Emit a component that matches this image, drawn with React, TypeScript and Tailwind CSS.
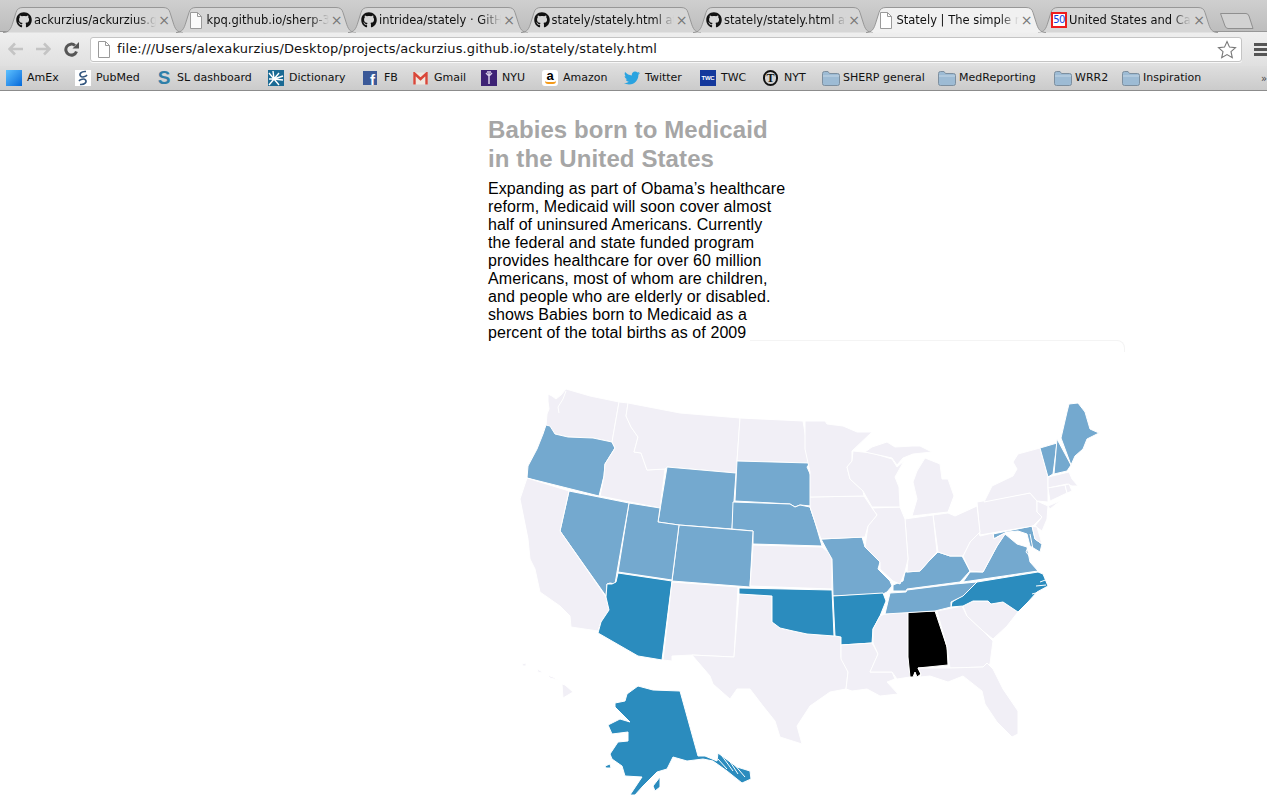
import React from 'react';
import { FaGithub, FaTwitter } from 'react-icons/fa';

const NONE = '#f1eff6';
const LIGHT = '#74a9cf';
const DARK = '#2b8cbe';

interface State {
  id: string;
  fill: string;
  pts: string;
}

// page coordinates, viewBox below is offset to match
const states: State[] = [
  { id: 'WA', fill: NONE, pts: '548,395 552,397 556,400 561,396 566,390 590,397 619,403 612,443 593,439 568,438 555,435 546,427 547,415 549,410 548,402' },
  { id: 'OR', fill: LIGHT, pts: '546,426 550,427 555,435 568,438 593,439 612,443 615,449 605,465 604,477 599,497 527,479 528,467 537,450 543,435' },
  { id: 'ID', fill: NONE, pts: '619,403 628,404 626,417 631,428 638,438 634,453 641,454 647,471 665,470 660,509 600,497 604,477 605,465 615,449 612,443' },
  { id: 'MT', fill: NONE, pts: '628,404 680,414 740,419 737,462 736,474 667,468 665,470 647,471 641,454 634,453 638,438 631,428 626,417' },
  { id: 'WY', fill: LIGHT, pts: '667,468 736,474 732,530 679,526 658,523' },
  { id: 'ND', fill: NONE, pts: '740,419 803,422 806,440 810,464 737,462' },
  { id: 'SD', fill: LIGHT, pts: '737,462 810,464 807,468 811,477 811,507 800,506 795,508 790,505 735,502' },
  { id: 'NE', fill: LIGHT, pts: '733,503 790,505 795,508 800,506 810,508 815,523 822,547 753,545 753,532 732,530' },
  { id: 'CO', fill: LIGHT, pts: '679,526 753,532 750,588 672,582' },
  { id: 'UT', fill: LIGHT, pts: '629,504 660,509 658,523 679,526 672,581 618,573' },
  { id: 'NV', fill: LIGHT, pts: '569,492 629,504 617,573 615,585 610,584 607,585 606,597 560,532' },
  { id: 'CA', fill: NONE, pts: '527,479 569,492 560,532 606,598 609,611 601,623 598,632 571,628 570,617 560,607 540,593 535,570 530,560 528,540 520,500' },
  { id: 'AZ', fill: DARK, pts: '618,574 672,582 662,661 638,657 598,634 601,623 609,611 606,598 607,585 612,585 616,583' },
  { id: 'NM', fill: NONE, pts: '672,583 738,588 734,658 692,656 672,657 672,662 663,661' },
  { id: 'TX', fill: NONE, pts: '739,595 772,597 772,623 780,629 793,632 807,635 835,637 841,638 841,658 848,673 846,690 830,693 810,707 797,727 802,745 780,738 775,722 763,707 750,690 737,690 730,700 713,685 710,677 692,656 734,658' },
  { id: 'OK', fill: DARK, pts: '739,589 832,591 834,637 807,635 793,632 780,629 772,623 772,597 739,595' },
  { id: 'KS', fill: NONE, pts: '753,546 822,548 828,553 832,560 832,590 750,587' },
  { id: 'MO', fill: LIGHT, pts: '821,540 862,538 865,548 880,563 878,570 890,582 892,587 887,593 883,595 833,597 832,560 828,553' },
  { id: 'AR', fill: DARK, pts: '833,597 883,594 886,602 880,617 873,630 872,644 841,646 841,638 835,637' },
  { id: 'LA', fill: NONE, pts: '841,646 872,644 878,655 870,673 892,673 895,680 887,683 898,695 880,697 867,690 852,692 846,690 848,673 841,660' },
  { id: 'MS', fill: NONE, pts: '885,615 908,613 908,658 910,678 897,680 892,673 870,673 878,655 873,644 873,630 880,617' },
  { id: 'AL', fill: '#000000', pts: '908,613 935,612 947,648 948,666 918,669 921,675 917,678 915,673 913,678 910,678 908,658' },
  { id: 'GA', fill: NONE, pts: '937,612 962,607 967,617 983,632 993,642 991,657 990,665 983,668 950,669 947,648' },
  { id: 'SC', fill: NONE, pts: '963,607 973,602 988,602 991,605 1003,603 1018,613 1007,627 993,640 983,632 967,617' },
  { id: 'FL', fill: NONE, pts: '950,669 983,668 987,664 993,670 1003,690 1018,712 1018,735 1012,738 997,723 985,705 982,692 963,677 948,683 930,677 920,678 921,675 918,669' },
  { id: 'NC', fill: DARK, pts: '951,608 952,603 965,595 977,583 1038,573 1043,575 1048,587 1037,593 1028,603 1018,613 1003,603 991,605 988,602 973,602 963,607' },
  { id: 'TN', fill: LIGHT, pts: '890,594 906,593 907,591 955,585 977,583 963,597 951,603 951,608 935,612 885,615' },
  { id: 'KY', fill: LIGHT, pts: '893,586 903,582 905,573 920,572 928,563 938,553 950,557 962,557 970,572 960,583 907,590 906,592 893,592' },
  { id: 'VA', fill: LIGHT, pts: '963,583 970,573 983,573 997,547 1005,535 1017,545 1027,548 1030,563 1038,572' },
  { id: 'MD', fill: LIGHT, pts: '993,535 1032,527 1035,540 1042,545 1040,553 1030,547 1027,535 1018,532 1007,533 997,538 994,540' },
  { id: 'WV', fill: NONE, pts: '978,530 980,537 993,534 994,540 1003,535 1007,533 1005,535 997,547 983,573 970,572 963,557 970,543' },
  { id: 'PA', fill: NONE, pts: '977,503 1030,494 1037,502 1037,513 1042,518 1033,527 980,536' },
  { id: 'NJ', fill: NONE, pts: '1037,502 1048,507 1047,520 1042,532 1035,527 1042,518 1037,513' },
  { id: 'OH', fill: NONE, pts: '933,516 948,514 955,517 977,507 980,533 970,543 963,557 950,557 938,553' },
  { id: 'IN', fill: NONE, pts: '905,520 933,516 937,553 928,563 920,572 907,573 908,560' },
  { id: 'IL', fill: NONE, pts: '872,509 900,508 905,520 908,560 905,573 900,585 893,582 880,570 880,563 865,548 868,527 877,516' },
  { id: 'IA', fill: NONE, pts: '810,498 864,497 872,509 877,516 868,527 865,538 821,540 815,523 810,508' },
  { id: 'MN', fill: NONE, pts: '805,422 825,422 827,425 843,427 857,433 872,433 852,452 852,462 847,468 850,480 863,492 864,497 810,498 810,473 805,450' },
  { id: 'WI', fill: NONE, pts: '853,452 872,454 892,460 897,468 904,462 895,478 899,488 900,508 872,508 863,492 850,480 847,468 852,462' },
  { id: 'MIU', fill: NONE, pts: '865,453 872,448 887,443 895,448 913,447 920,447 932,453 913,455 903,459 897,466 892,459' },
  { id: 'MIL', fill: NONE, pts: '925,459 940,465 942,480 948,480 954,497 948,513 912,517 917,500 913,483 917,472' },
  { id: 'NY', fill: NONE, pts: '1013,463 1018,455 1040,449 1048,478 1048,503 1037,502 1030,494 984,503 992,487 1013,477 1017,470' },
  { id: 'LI', fill: NONE, pts: '1048,507 1060,502 1050,510' },
  { id: 'VT', fill: LIGHT, pts: '1040,449 1057,444 1053,475 1048,478' },
  { id: 'NH', fill: LIGHT, pts: '1057,440 1071,466 1067,472 1054,475' },
  { id: 'ME', fill: LIGHT, pts: '1061,439 1067,413 1069,405 1078,404 1085,413 1090,430 1099,434 1087,440 1083,450 1075,457 1071,466' },
  { id: 'MA', fill: NONE, pts: '1048,478 1069,473 1072,480 1078,487 1072,487 1067,485 1048,489' },
  { id: 'CT', fill: NONE, pts: '1048,489 1065,486 1067,494 1050,502' },
  { id: 'RI', fill: NONE, pts: '1065,486 1069,485 1072,492 1067,494' },
  { id: 'DE', fill: NONE, pts: '1032,527 1035,540 1042,545 1037,528' },
  { id: 'HI1', fill: NONE, pts: '562,685 565,686 573,693 563,699' },
  { id: 'HI2', fill: NONE, pts: '547,676 553,678 558,681 550,679' },
  { id: 'HI3', fill: NONE, pts: '537,670 541,672 542,674 538,673' },
  { id: 'HI4', fill: NONE, pts: '522,665 526,664 526,667 523,667' },
  { id: 'AK', fill: DARK, pts: '627,695 638,687 653,691 680,692 698,757 705,757 717,762 718,754 737,768 750,772 751,780 742,784 727,772 713,762 703,760 687,762 673,758 667,770 657,773 643,787 635,796 630,796 642,778 625,777 622,767 612,760 610,755 618,743 628,742 628,733 612,735 608,726 620,720 630,723 615,708 615,704 625,702' },
  { id: 'AK2', fill: DARK, pts: '653,787 660,778 660,788 655,792' },
  { id: 'AK3', fill: DARK, pts: '605,767 610,765 611,769 606,769' },
];

// white inlets drawn over the fills: sounds, bays, island gaps
const inlets =
  'M566,392 L563,400 L558,408 L559,414 M722,757 L733,772 M727,758 L738,775 M733,764 L745,778 M718,760 L727,770 ' +
  'M1024,538 L1028,548 L1026,553 L1032,560 M1030,535 L1033,550 L1036,562 M1048,580 L1040,583 M1046,586 L1036,587 M1043,592 L1032,595';

const PageIcon = ({ active }: { active?: boolean }) => (
  <svg width="14" height="17" viewBox="0 0 14 17" className="shrink-0">
    <path d="M1.5 .5h7l4 4v12h-11z" fill={active ? '#fff' : '#fbfbfb'} stroke="#9a9a9a" />
    <path d="M8.5 .5v4h4" fill="none" stroke="#9a9a9a" />
  </svg>
);

const Tab = ({ title, icon, active }: { title: string; icon: React.ReactNode; active?: boolean }) => (
  <div className={`relative h-[26px] w-[180px] -ml-[7.5px] first:ml-0 shrink-0 flex items-center pl-[13px] pr-[13px] ${active ? 'z-10' : ''}`}>
    <svg width="180" height="26" viewBox="0 0 180 26" className="absolute inset-0">
      <path
        d="M0 25.5C6 25.5 8 22 10 15L13 5.5C14 2 16 .5 20 .5H160C164 .5 166 2 167 5.5L170 15C172 22 174 25.5 180 25.5"
        fill={active ? '#f1f1f1' : '#d6d6d6'}
        stroke="#979797"
      />
    </svg>
    <div className="relative flex items-center w-[155px]">
      <div className="w-[18px] shrink-0 flex items-center">{icon}</div>
      <span className="w-[122px] pt-[2px] overflow-hidden whitespace-nowrap text-[11.5px] text-[#111] [mask-image:linear-gradient(to_right,black_84%,transparent)]">
        {title}
      </span>
      <span className="ml-auto text-[14px] leading-none text-[#777]">×</span>
    </div>
  </div>
);

const Folder = () => (
  <svg width="18" height="15" viewBox="0 0 18 15">
    <path d="M.5 2.5q0-2 2-2h3.5l1.5 2h8q2 0 2 2v8q0 2-2 2h-13q-2 0-2-2z" fill="#9dbbd4" stroke="#7d8f9f" />
    <path d="M1 5h16" stroke="#c5d7e6" />
  </svg>
);

interface Bookmark {
  label: string;
  width: string;
  icon: React.ReactNode;
}

const bookmarks: Bookmark[] = [
  { label: 'AmEx', width: 'w-[69px]', icon: <div className="w-4 h-4 bg-gradient-to-br from-[#5cc1ff] to-[#0068d9]" /> },
  {
    label: 'PubMed',
    width: 'w-[81px]',
    icon: (
      <svg width="16" height="16" viewBox="0 0 16 16" className="bg-white">
        <path d="M11 1.500C6 1 4 4 5.500 6S11 6.500 12 5" fill="none" stroke="#33567f" strokeWidth="1.600" />
        <path d="M5 14.500c5 .5 7-2.500 5.500-4.500S5 9.500 4 11" fill="none" stroke="#33567f" strokeWidth="1.600" />
      </svg>
    ),
  },
  {
    label: 'SL dashboard',
    width: 'w-[112px]',
    icon: <span className="w-4 text-center text-[19px] leading-4 font-bold text-[#2f7fa8] font-['Liberation_Sans',sans-serif]">S</span>,
  },
  {
    label: 'Dictionary',
    width: 'w-[95px]',
    icon: (
      <svg width="16" height="16" viewBox="0 0 16 16" className="bg-[#1a6a94]">
        <path d="M1 15L6 9M6 9L1 3M6 9L5 1M6 9L11 3M6 9L15 6M6 9L15 10M6 9L11 15M1 9H6" stroke="#fff" strokeWidth="1.4" />
      </svg>
    ),
  },
  {
    label: 'FB',
    width: 'w-[50px]',
    icon: (
      <div className="w-[14px] h-[14px] bg-[#3b5998] flex justify-end overflow-hidden">
        <span className="text-[15px] leading-[17px] pr-[2px] font-bold text-white font-['Liberation_Sans',sans-serif]">f</span>
      </div>
    ),
  },
  {
    label: 'Gmail',
    width: 'w-[68px]',
    icon: (
      <svg width="15" height="13" viewBox="0 0 15 13">
        <rect x="0.5" y="0.5" width="14" height="12" fill="#eee8e0" />
        <path d="M1.5 12.5V1.5L7.5 7l6-5.500V12.500" fill="none" stroke="#d9473a" strokeWidth="2.4" />
      </svg>
    ),
  },
  {
    label: 'NYU',
    width: 'w-[61px]',
    icon: (
      <svg width="16" height="16" viewBox="0 0 16 16" className="bg-[#3d2275]">
        <path d="M8 3v11M5 3l3 3 3-3M6 2h4" stroke="#d8cfe8" strokeWidth="1.500" fill="none" />
      </svg>
    ),
  },
  {
    label: 'Amazon',
    width: 'w-[82px]',
    icon: (
      <div className="w-4 h-4 rounded-[3px] bg-white flex flex-col items-center overflow-hidden">
        <span className="text-[13px] leading-[11px] font-bold text-black font-['Liberation_Sans',sans-serif]">a</span>
        <div className="w-[11px] h-[3px] border-b-2 border-[#f49a1a] rounded-b-full" />
      </div>
    ),
  },
  { label: 'Twitter', width: 'w-[76px]', icon: <FaTwitter size={16} className="text-[#2aa3e0]" /> },
  {
    label: 'TWC',
    width: 'w-[63px]',
    icon: (
      <div className="w-4 h-4 bg-[#14389c] flex items-center justify-center">
        <span className="text-[6px] font-bold tracking-tighter text-white font-['Liberation_Sans',sans-serif]">TWC</span>
      </div>
    ),
  },
  {
    label: 'NYT',
    width: 'w-[59px]',
    icon: (
      <div className="w-[15px] h-4 rounded-full border-2 border-[#111] flex items-center justify-center">
        <span className="text-[12px] leading-none font-bold text-[#111] font-['Liberation_Serif',serif]">T</span>
      </div>
    ),
  },
  { label: 'SHERP general', width: 'w-[116px]', icon: <Folder /> },
  { label: 'MedReporting', width: 'w-[116px]', icon: <Folder /> },
  { label: 'WRR2', width: 'w-[68px]', icon: <Folder /> },
  { label: 'Inspiration', width: 'w-[139px]', icon: <Folder /> },
];

const tabs = [
  { title: 'ackurzius/ackurzius.github.io', icon: <FaGithub size={16} className="text-[#111]" /> },
  { title: 'kpq.github.io/sherp-3', icon: <PageIcon /> },
  { title: 'intridea/stately · GitHub', icon: <FaGithub size={16} className="text-[#111]" /> },
  { title: 'stately/stately.html at master', icon: <FaGithub size={16} className="text-[#111]" /> },
  { title: 'stately/stately.html at master', icon: <FaGithub size={16} className="text-[#111]" /> },
  { title: 'Stately | The simple map', icon: <PageIcon active />, active: true },
  {
    title: 'United States and Capitals',
    icon: (
      <div className="w-4 h-4 border-2 border-[#ee1c1c] bg-white flex items-center justify-center">
        <span className="text-[10px] leading-none text-[#1240e0] tracking-tighter">50</span>
      </div>
    ),
  },
];

const Toolbar = () => (
  <div className="h-[34px] flex items-center bg-gradient-to-b from-[#efefef] to-[#e0e0e0]">
    <div className="w-[90px] shrink-0 flex items-center pl-2">
      <svg width="15" height="14" viewBox="0 0 15 14" className="mr-[13px]">
        <path d="M7 1.500L1.500 7 7 12.500M2 7h13" fill="none" stroke="#c4c4c4" strokeWidth="2.600" />
      </svg>
      <svg width="15" height="14" viewBox="0 0 15 14" className="mr-[13px]">
        <path d="M8 1.500L13.500 7 8 12.500M13 7H0" fill="none" stroke="#c4c4c4" strokeWidth="2.600" />
      </svg>
      <svg width="15" height="15" viewBox="0 0 15 15">
        <path d="M12.500 9.500A5.500 5.500 0 1 1 11 3.500" fill="none" stroke="#555" strokeWidth="3" />
        <path d="M8.500 6.500H15V0z" fill="#555" />
      </svg>
    </div>
    <div className="w-[1152px] h-[25px] flex items-center pl-[6px] pr-[4px] bg-white rounded-[3px] border border-[#c4c4c4] shadow-[0_1px_0_#f8f8f8]">
      <PageIcon active />
      <span className="ml-[6px] text-[13px] tracking-[0.12px] text-[#111] whitespace-nowrap">
        file:///Users/alexakurzius/Desktop/projects/ackurzius.github.io/stately/stately.html
      </span>
      <svg width="20" height="19" viewBox="0 0 20 19" className="ml-auto">
        <path d="M10 1.500l2.500 5.600 6 .6-4.500 4 1.300 6L10 14.600 4.700 17.700l1.300-6-4.500-4 6-.6z" fill="#fff" stroke="#777" strokeWidth="1.100" />
      </svg>
    </div>
    <div className="ml-auto w-[13px] flex flex-col gap-[2px] overflow-hidden">
      <div className="h-[3px] bg-[#555]" />
      <div className="h-[3px] bg-[#555]" />
      <div className="h-[3px] bg-[#555]" />
    </div>
  </div>
);

const App: React.FC = () => {
  return (
    <div className="w-[1267px] h-[796px] overflow-hidden bg-white font-['DejaVu_Sans',sans-serif]">
      {/* Browser chrome */}
      <div className="border-b border-[#8c8c8c]">
        <div className="relative h-[32px] pt-[7px] pl-[3px] flex bg-gradient-to-b from-[#cfcfcf] to-[#bdbdbd] border-b border-[#979797]">
          {tabs.map((tab, i) => (
            <Tab key={i} title={tab.title} icon={tab.icon} active={tab.active} />
          ))}
          <svg width="34" height="16" viewBox="0 0 34 16" className="ml-[2px] mt-[6px]">
            <path d="M.5 .5H26Q28 .5 29 3L33 15.500H8Q6 15.500 5 13z" fill="#d2d2d2" stroke="#8f8f8f" />
          </svg>
        </div>
        <Toolbar />
        <div className="h-[24px] flex items-center pl-[6px] bg-gradient-to-b from-[#dedede] to-[#cbcbcb]">
          {bookmarks.map((b) => (
            <div key={b.label} className={`${b.width} shrink-0 flex items-center`}>
              <div className="w-[21px] shrink-0 flex items-center">{b.icon}</div>
              <span className="text-[11px] text-[#111] whitespace-nowrap">{b.label}</span>
            </div>
          ))}
          <span className="text-[10px] text-[#444]">»</span>
        </div>
      </div>

      {/* Page content */}
      <div className="pl-[488px] font-['Liberation_Sans',sans-serif]">
        <h1 className="pt-[24px] text-[24px] leading-[29px] font-bold text-[#a6a6a6] tracking-[0.1px]">
          Babies born to Medicaid
          <br />
          in the United States
        </h1>
        <p className="mt-[7px] w-[320px] text-[16px] leading-[18px] tracking-[0.08px] text-black">
          Expanding as part of Obama’s healthcare
          <br />
          reform, Medicaid will soon cover almost
          <br />
          half of uninsured Americans. Currently
          <br />
          the federal and state funded program
          <br />
          provides healthcare for over 60 million
          <br />
          Americans, most of whom are children,
          <br />
          and people who are elderly or disabled.
          <br />
          shows Babies born to Medicaid as a
          <br />
          percent of the total births as of 2009
        </p>
        <div className="-mt-[2px] ml-[262px] w-[375px] h-[12px] border-t border-r border-[#f4f4f4] rounded-tr-[8px]" />
        <svg width="600" height="416" viewBox="510 380 600 416" className="block ml-[22px] mt-[27px]">
          {states.map((s) => (
            <polygon key={s.id} points={s.pts} fill={s.fill} stroke="#fff" strokeWidth="1" strokeLinejoin="round" />
          ))}
          <path d={inlets} fill="none" stroke="#fff" strokeWidth="1" />
        </svg>
      </div>
    </div>
  );
};

export default App;
